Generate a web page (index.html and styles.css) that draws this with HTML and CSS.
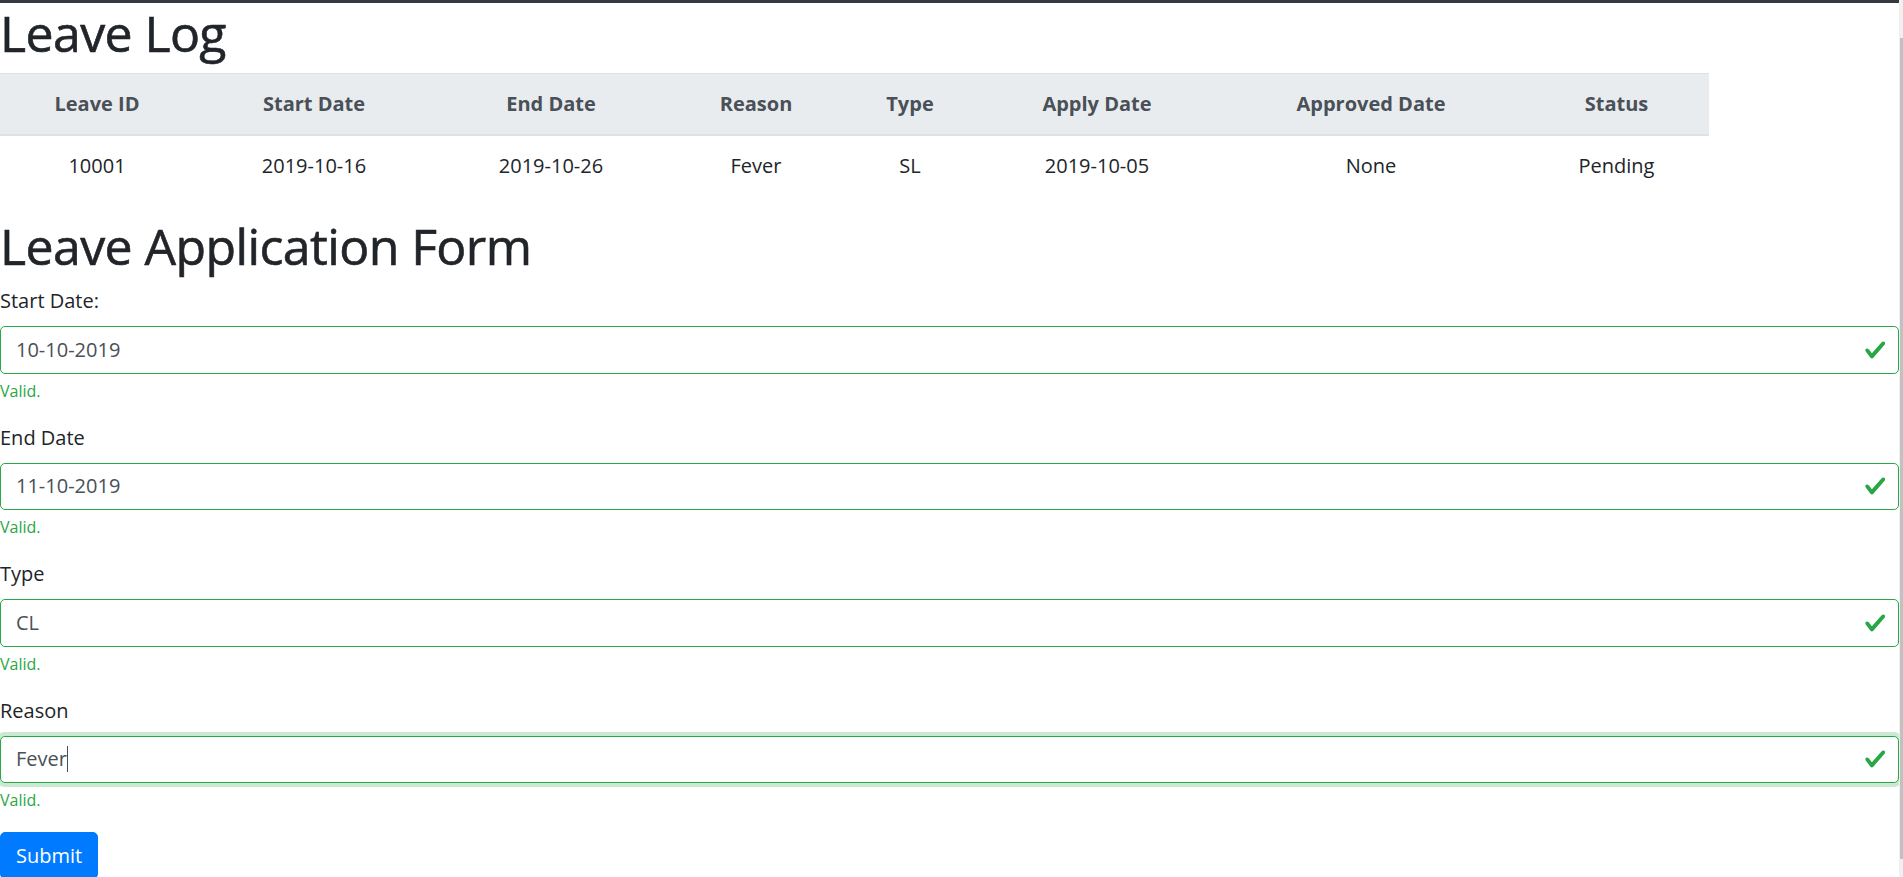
FILE: index.html
```html
<!DOCTYPE html>
<html lang="en">
<head>
<meta charset="utf-8">
<title>Leave</title>
<link rel="stylesheet" href="styles.css">
</head>
<body>
<div class="page">
  <div class="topbar"></div>
  <main class="content">
    <h1>Leave Log</h1>
    <table class="log">
      <colgroup>
        <col class="c1"><col class="c2"><col class="c3"><col class="c4">
        <col class="c5"><col class="c6"><col class="c7"><col class="c8">
      </colgroup>
      <thead>
        <tr>
          <th>Leave ID</th><th>Start Date</th><th>End Date</th><th>Reason</th>
          <th>Type</th><th>Apply Date</th><th>Approved Date</th><th>Status</th>
        </tr>
      </thead>
      <tbody>
        <tr>
          <td>10001</td><td>2019-10-16</td><td>2019-10-26</td><td>Fever</td>
          <td>SL</td><td>2019-10-05</td><td>None</td><td>Pending</td>
        </tr>
      </tbody>
    </table>

    <h1>Leave Application Form</h1>
    <form class="form">
      <div class="group">
        <label class="label">Start Date:</label>
        <div class="control"><span class="value">10-10-2019</span><svg class="check" viewBox="0 0 8 8"><path d="M2.3 6.73L.6 4.530c-.4-1.04.46-1.4 1.1-.8l1.1 1.4 3.4-3.8c.6-.63 1.6-.27 1.2.7l-4 4.6c-.43.5-.8.4-1.1.1z"/></svg></div>
        <div class="feedback">Valid.</div>
      </div>
      <div class="group">
        <label class="label">End Date</label>
        <div class="control"><span class="value">11-10-2019</span><svg class="check" viewBox="0 0 8 8"><path d="M2.3 6.73L.6 4.53c-.4-1.04.46-1.4 1.1-.8l1.1 1.4 3.4-3.8c.6-.63 1.6-.27 1.2.7l-4 4.6c-.43.5-.8.4-1.1.1z"/></svg></div>
        <div class="feedback">Valid.</div>
      </div>
      <div class="group">
        <label class="label">Type</label>
        <div class="control"><span class="value">CL</span><svg class="check" viewBox="0 0 8 8"><path d="M2.3 6.73L.6 4.53c-.4-1.04.46-1.4 1.1-.8l1.1 1.4 3.4-3.8c.6-.63 1.6-.27 1.2.7l-4 4.6c-.43.5-.8.4-1.1.1z"/></svg></div>
        <div class="feedback">Valid.</div>
      </div>
      <div class="group">
        <label class="label">Reason</label>
        <div class="control focus"><span class="value">Fever</span><span class="caret"></span><svg class="check" viewBox="0 0 8 8"><path d="M2.3 6.73L.6 4.53c-.4-1.04.46-1.4 1.1-.8l1.1 1.4 3.4-3.8c.6-.63 1.6-.27 1.2.7l-4 4.6c-.43.5-.8.4-1.1.1z"/></svg></div>
        <div class="feedback">Valid.</div>
      </div>
      <button type="button" class="btn">Submit</button>
    </form>
  </main>
</div>
<div class="scrollbar"><div class="thumb"></div></div>
</body>
</html>
```

FILE: styles.css
```css
html, body {
  margin: 0;
  padding: 0;
  height: 100%;
  overflow: hidden;
}

body {
  font-family: "Open Sans", "Noto Sans", "Liberation Sans", sans-serif;
  font-size: 20px;
  line-height: 1.5;
  color: #212529;
  background: #fff;
}

.page {
  margin-right: 4px;
}

.topbar {
  height: 3px;
  background: #343a40;
}

h1 {
  font-size: 50px;
  font-weight: 500;
  line-height: 1.2;
  letter-spacing: -0.6px;
  margin: 0 0 10px;
  -webkit-text-stroke: 0.6px #212529;
}

.log {
  border-collapse: collapse;
  table-layout: fixed;
  width: 1709px;
  margin-bottom: 20px;
}

.c1 { width: 194px; }
.c2 { width: 240px; }
.c3 { width: 234px; }
.c4 { width: 176px; }
.c5 { width: 132px; }
.c6 { width: 242px; }
.c7 { width: 306px; }
.c8 { width: 185px; }

.log th,
.log td {
  padding: 15px;
  text-align: center;
  vertical-align: top;
  white-space: nowrap;
}

.log thead th {
  background: #e9ecef;
  color: #495057;
  font-weight: 700;
  border-top: 1px solid #dee2e6;
  border-bottom: 2px solid #dee2e6;
}

.log td {
  border-top: 1px solid #dee2e6;
}

.group {
  margin-bottom: 20px;
}

.label {
  display: inline-block;
  margin-bottom: 10px;
}

.control {
  position: relative;
  display: flex;
  align-items: center;
  box-sizing: border-box;
  height: 47.5px;
  padding: 7.5px 45px 7.5px 15px;
  border: 1px solid #28a745;
  border-radius: 5px;
  color: #495057;
  background: #fff;
}

.control.focus {
  box-shadow: 0 0 0 4px rgba(40, 167, 69, 0.25);
}

.caret {
  display: inline-block;
  width: 1px;
  height: 26px;
  background: #495057;
}

.check {
  position: absolute;
  right: 11.25px;
  top: 50%;
  width: 22.5px;
  height: 22.5px;
  transform: translateY(-50%);
  fill: #28a745;
}

.feedback {
  margin-top: 5px;
  font-size: 16px;
  line-height: 24px;
  color: #28a745;
}

.btn {
  display: inline-block;
  font-family: inherit;
  font-size: 20px;
  line-height: 30px;
  font-weight: 400;
  color: #fff;
  background: #007bff;
  border: 1px solid #007bff;
  border-radius: 5px;
  padding: 7.5px 15px;
  cursor: pointer;
}

.scrollbar {
  position: fixed;
  top: 0;
  right: 0;
  width: 4px;
  height: 100%;
  background: #f0f0f0;
}

.thumb {
  position: absolute;
  top: 38px;
  right: 0;
  width: 3px;
  height: 821px;
  background: #c1c1c1;
}
```
